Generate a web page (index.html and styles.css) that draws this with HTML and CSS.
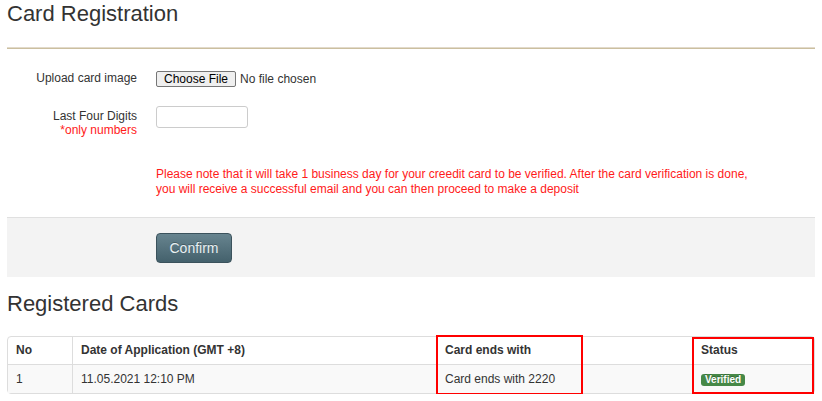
FILE: index.html
```html
<!DOCTYPE html>
<html lang="en">
<head>
    <meta charset="UTF-8">
    <meta name="viewport" content="width=device-width, initial-scale=1.0">
    <title>Card Registration</title>
    <link rel="stylesheet" href="styles.css">
</head>
<body>
    <div class="page">
        <!-- Card registration form -->
        <h1 class="page-title">Card Registration</h1>
        <hr class="title-rule">

        <form class="reg-form">
            <div class="form-row">
                <label class="form-label" for="cardImage">Upload card image</label>
                <div class="form-control">
                    <input type="file" id="cardImage" class="file-input">
                </div>
            </div>

            <div class="form-row">
                <label class="form-label form-label-2" for="digits">
                    Last Four Digits
                    <span class="hint">*only numbers</span>
                </label>
                <div class="form-control">
                    <input type="text" id="digits" class="digits-input" maxlength="4">
                </div>
            </div>

            <div class="form-row">
                <div></div>
                <p class="note">Please note that it will take 1 business day for your creedit card to be verified. After the card verification is done, you will receive a successful email and you can then proceed to make a deposit</p>
            </div>

            <div class="form-actions">
                <button type="submit" class="btn-confirm">Confirm</button>
            </div>
        </form>

        <!-- List of registered cards -->
        <h2 class="section-title">Registered Cards</h2>

        <div class="table-wrap">
            <table class="cards-table">
                <thead>
                    <tr>
                        <th class="col-no">No</th>
                        <th class="col-date">Date of Application (GMT +8)</th>
                        <th class="col-card">Card ends with</th>
                        <th class="col-status">Status</th>
                    </tr>
                </thead>
                <tbody>
                    <tr>
                        <td>1</td>
                        <td>11.05.2021 12:10 PM</td>
                        <td>Card ends with 2220</td>
                        <td><span class="badge-ok">Verified</span></td>
                    </tr>
                </tbody>
            </table>

            <!-- red highlight boxes -->
            <div class="mark mark-card"></div>
            <div class="mark mark-status"></div>
        </div>
    </div>
</body>
</html>
```

FILE: styles.css
```css
/* Base page */
body {
    margin: 0;
    font-family: "Liberation Sans", Arial, sans-serif;
    font-size: 12px;
    line-height: 14px;
    color: #333;
    background-color: #fff;
}

.page {
    margin: 0 7px;
    padding-top: 2px;
}

/* Headings */
.page-title,
.section-title {
    margin: 0;
    font-size: 22px;
    line-height: 24px;
    font-weight: normal;
    color: #333;
}

.title-rule {
    margin: 21px 0 0;
    border: none;
    height: 2px;
    background: linear-gradient(#e2dacb 0 50%, #cbbf9f 50% 100%);
}

/* Form */
.reg-form {
    margin-top: 22px;
}

.form-row {
    display: grid;
    grid-template-columns: 130px 1fr;
    column-gap: 19px;
    margin-bottom: 19px;
}

.form-label {
    text-align: right;
    color: #333;
}

.form-label-2 {
    padding-top: 3px;
}

.hint {
    display: block;
    color: #ff1a1a;
}

.file-input {
    font-family: "Liberation Sans", Arial, sans-serif;
    font-size: 12px;
    color: #333;
}

.file-input::file-selector-button {
    font-family: "Liberation Sans", Arial, sans-serif;
    font-size: 12px;
    height: 16px;
    padding: 0 7px;
    margin-right: 4px;
    border: 1px solid #767676;
    border-radius: 2px;
    background-color: #efefef;
    color: #000;
}

.digits-input {
    box-sizing: border-box;
    width: 92px;
    height: 22px;
    border: 1px solid #ccc;
    border-radius: 3px;
    padding: 2px 4px;
    font-size: 12px;
}

.note {
    max-width: 600px;
    margin: 11px 0 1px;
    line-height: 15px;
    color: #ff1a1a;
}

.form-actions {
    background-color: #f3f3f3;
    border-top: 1px solid #e0e0e0;
    padding: 15px 0 14px 149px;
}

.btn-confirm {
    width: 76px;
    height: 30px;
    font-family: "Liberation Sans", Arial, sans-serif;
    font-size: 14px;
    color: #e8f0f2;
    text-shadow: 0 -1px 0 rgba(0, 0, 0, 0.25);
    background: linear-gradient(#67848f, #44616c);
    border: 1px solid #3b525c;
    border-radius: 4px;
    cursor: pointer;
}

/* Registered cards */
.section-title {
    margin-top: 15px;
}

.table-wrap {
    position: relative;
    margin-top: 20px;
}

.cards-table {
    width: 100%;
    table-layout: fixed;
    border-collapse: separate;
    border-spacing: 0;
    border: 1px solid #ddd;
    border-radius: 4px;
}

.cards-table th,
.cards-table td {
    text-align: left;
    padding: 7px 8px;
    line-height: 14px;
}

.cards-table th {
    padding-top: 6px;
    font-weight: bold;
}

.cards-table th + th,
.cards-table td + td {
    border-left: 1px solid #ddd;
}

.cards-table td {
    border-top: 1px solid #ddd;
    background-color: #f9f9f9;
}

.col-no { width: 48px; }
.col-date { width: 347px; }
.col-card { width: 239px; }

.badge-ok {
    display: inline-block;
    vertical-align: top;
    margin-top: 2px;
    padding: 0 4px;
    font-size: 10px;
    line-height: 12px;
    font-weight: bold;
    color: #fff;
    background-color: #468847;
    border-radius: 3px;
    text-shadow: 0 -1px 0 rgba(0, 0, 0, 0.25);
}

/* Red highlight frames drawn over the table */
.mark {
    position: absolute;
    border: 2px solid #f00;
    box-sizing: border-box;
}

.mark-card {
    left: 429px;
    top: -1px;
    width: 147px;
    height: 60px;
}

.mark-status {
    left: 685px;
    top: 1px;
    width: 122px;
    height: 57px;
}
```
